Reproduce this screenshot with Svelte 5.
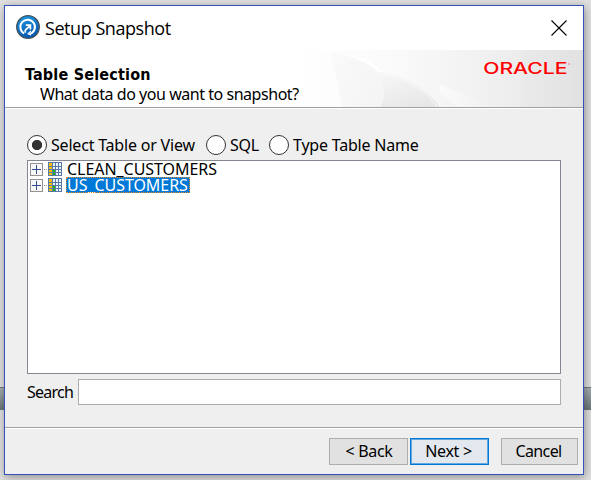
<script>
  let mode = $state('table');
  let search = $state('');
  let selected = $state('US_CUSTOMERS');
  const modes = [
    { id: 'table', label: 'Select Table or View', width: 179, spacing: -0.2 },
    { id: 'sql', label: 'SQL', width: 63, spacing: -0.3 },
    { id: 'name', label: 'Type Table Name', width: 160, spacing: -0.2 }
  ];
  const tables = ['CLEAN_CUSTOMERS', 'US_CUSTOMERS'];
</script>

<main class="desktop">
  <div class="taskbar"></div>
  <section class="dialog">
    <header class="titlebar">
      <svg class="appicon" width="24" height="24" viewBox="0 0 24 24">
        <defs>
          <linearGradient id="ball" x1="0" y1="0" x2="0.3" y2="1">
            <stop offset="0" stop-color="#1b9be0" />
            <stop offset="1" stop-color="#0758b4" />
          </linearGradient>
        </defs>
        <circle cx="12" cy="12" r="11.3" fill="url(#ball)" stroke="#45535f" stroke-width="1.3" />
        <path d="M8.2 18.4 A7.3 7.3 0 1 1 13.6 19" fill="none" stroke="#fff" stroke-width="2" />
        <path d="M15 15.8 L12 18.8 L15 20" fill="none" stroke="#fff" stroke-width="1.1" />
        <path d="M9.8 10.2 H14.4 V14.6 M14 10.6 L9.6 14.8 Q8.6 16 9.6 17.6" fill="none" stroke="#fff" stroke-width="1.7" />
      </svg>
      <h1>Setup Snapshot</h1>
      <svg class="close" width="16" height="16" viewBox="0 0 16 16">
        <path d="M0.5 0.5 L15.5 15.5 M15.5 0.5 L0.5 15.5" stroke="#000" stroke-width="1.1" />
      </svg>
    </header>

    <div class="banner">
      <svg class="art" width="291" height="57" viewBox="0 0 291 57">
        <defs>
          <linearGradient id="fade">
            <stop offset="0" stop-color="#fff" />
            <stop offset="0.35" stop-color="#fafafa" />
            <stop offset="0.75" stop-color="#eeeeee" />
            <stop offset="1" stop-color="#e2e2e2" />
          </linearGradient>
          <linearGradient id="shade" x1="0" y1="0" x2="1" y2="0.5">
            <stop offset="0" stop-color="#f7f7f7" stop-opacity="0.5" />
            <stop offset="1" stop-color="#f5f5f5" />
          </linearGradient>
          <linearGradient id="leaf" x1="0" y1="0" x2="0.7" y2="1">
            <stop offset="0" stop-color="#f8f8f8" />
            <stop offset="1" stop-color="#e7e7e7" />
          </linearGradient>
          <linearGradient id="beam" x1="0" y1="0" x2="1" y2="0.6">
            <stop offset="0" stop-color="#fff" stop-opacity="0.6" />
            <stop offset="1" stop-color="#fff" stop-opacity="0.1" />
          </linearGradient>
        </defs>
        <rect width="291" height="57" fill="url(#fade)" />
        <path d="M39 2 C62 5 88 16 94 36 Q94 46 88 57 H50 Z" fill="url(#shade)" />
        <path d="M39 3 C62 6 88 16 94 33 Q91 17 72 8 Z" fill="#fff" opacity="0.8" />
        <path d="M80 22 C112 23 133 38 148 57 H88 Q99 38 80 22 Z" fill="url(#leaf)" />
        <path d="M92 24 C118 30 135 42 145 57" fill="none" stroke="#fbfbfb" />
        <path d="M148 34 L198 57 H166 L148 43 Z" fill="url(#beam)" />
        <path d="M229 0 V57 H291 V0 Z" fill="#ddd" opacity="0.13" />
      </svg>
      <div class="heading">
        <h2>Table Selection</h2>
        <p>What data do you want to snapshot?</p>
      </div>
      <svg class="logo" width="88" height="22" viewBox="0 0 88 22">
        <text x="0.2" y="15" textLength="84.3" lengthAdjust="spacingAndGlyphs">ORACLE</text>
        <circle cx="86" cy="5" r="0.9" fill="#f88" />
      </svg>
    </div>

    <div class="content">
      <div class="modes">
        {#each modes as m}
          <label style:width="{m.width}px" style:letter-spacing="{m.spacing}px">
            <input type="radio" name="mode" value={m.id} bind:group={mode} />
            <span>{m.label}</span>
          </label>
        {/each}
      </div>

      <ul class="tree">
        {#each tables as t}
          <li>
            <svg width="34" height="16" viewBox="0 0 34 16" shape-rendering="crispEdges">
              <rect x="2.5" y="2.5" width="12" height="12" fill="#f8f8f8" stroke="#929292" />
              <path d="M4 8.5 H13 M8.5 4 V13" stroke="#31508f" />
              <path d="M16 8.5 H20" stroke="#999" stroke-dasharray="1 1" />
              <rect x="20" y="1" width="14" height="14" fill="#5878a8" />
              <path d="M21 2h3v3h-3z M21 6h3v2h-3z M21 9h3v2h-3z M21 12h3v2h-3z" fill="#fbc000" />
              <path d="M25 2h2v3h-2z M28 2h2v3h-2z M31 2h2v3h-2z M25 6h2v2h-2z M28 6h2v2h-2z M31 6h2v2h-2z M28 9h2v2h-2z M31 9h2v2h-2z M28 12h2v2h-2z M31 12h2v2h-2z" fill="#edf4fc" />
              <path d="M25 9h2v2h-2z M25 12h2v2h-2z" fill="#16b80c" />
            </svg>
            <button class:selected={selected === t} onclick={() => (selected = t)}>{t}</button>
          </li>
        {/each}
      </ul>

      <label class="search"><span>Search</span><input type="text" bind:value={search} /></label>
    </div>

    <footer>
      <button class="back">&lt; Back</button>
      <button class="next">Next &gt;</button>
      <button class="cancel">Cancel</button>
    </footer>
  </section>
</main>

<style>
  :global(body) { margin: 0; }
  * { box-sizing: border-box; }
  .desktop {
    position: relative;
    width: 591px;
    height: 480px;
    padding: 5px 7px 5px 4px;
    overflow: hidden;
    background: #e1e1e1;
    font: 16px/19px "Noto Sans", "Open Sans", sans-serif;
    letter-spacing: -0.3px;
    color: #000;
  }
  .taskbar {
    position: absolute;
    left: 0;
    top: 387px;
    width: 591px;
    height: 23px;
    border-top: 1px solid #727a7c;
    background: linear-gradient(#a8afb1, #6b7779);
  }
  .dialog {
    position: relative;
    display: flex;
    flex-direction: column;
    width: 580px;
    height: 470px;
    border: 1px solid #3450bd;
    background: #efefef;
    box-shadow: 1px 2px 9px rgba(0, 0, 0, 0.38);
  }
  .titlebar {
    display: flex;
    align-items: center;
    height: 44px;
    padding: 0 16px 0 11px;
    background: #fff;
  }
  .appicon { flex: none; margin-bottom: 2px; }
  h1 {
    flex: 1;
    margin: 0 0 0 5px;
    font: 18px/24px "Open Sans", sans-serif;
    letter-spacing: -0.45px;
  }
  .close { flex: none; margin-bottom: 1px; }
  .banner {
    position: relative;
    display: flex;
    justify-content: space-between;
    height: 59px;
    padding: 0 13px 0 20px;
    border-bottom: 1px solid #fff;
    background: #fff;
    box-shadow: inset 0 -1px #a0a0a0;
  }
  .art { position: absolute; right: 0; top: 0; }
  .heading { position: relative; padding-top: 15px; }
  h2 { margin: 0; font: bold 16px/19px "DejaVu Sans Condensed", "DejaVu Sans", sans-serif; font-stretch: condensed; letter-spacing: 0.2px; }
  p { margin: 0 0 0 15px; line-height: 20px; letter-spacing: -0.46px; white-space: nowrap; }
  .logo { position: relative; margin-top: 9px; margin-right: -1px; overflow: visible; }
  .logo text { font: 500 15.5px "Inter", sans-serif; fill: #f00; letter-spacing: 0; }
  .content { flex: 1; padding: 26px 22px 0; }
  .modes { display: flex; height: 20px; }
  .modes label { display: flex; align-items: center; white-space: nowrap; }
  .modes input {
    appearance: none;
    flex: none;
    width: 20px;
    height: 20px;
    margin: 0 4px 0 0;
    border: 1px solid #333;
    border-radius: 50%;
    background: #fff;
  }
  .modes input:checked { background: radial-gradient(circle, #333 4.7px, #fff 5.5px); }
  .tree {
    height: 214px;
    margin: 5px 0 0;
    padding: 0;
    border: 1px solid #828790;
    background: #fff;
    list-style: none;
  }
  li { display: flex; height: 16px; }
  li button {
    height: 16px;
    margin-left: 4px;
    padding: 0 2px 0 1px;
    border: 0;
    background: none;
    font: inherit;
    line-height: 16px;
    letter-spacing: -0.05px;
    color: #000;
  }
  li button.selected { background: #0078d7; color: #fff; outline: 1px dotted #e88a28; outline-offset: -1px; }
  .search { display: flex; align-items: center; height: 26px; margin-top: 5px; }
  .search span { width: 51px; letter-spacing: -0.75px; }
  .search input { flex: 1; height: 26px; border: 1px solid #abadb3; background: #fff; outline: 0; }
  footer {
    display: flex;
    height: 47px;
    padding: 10px 5px 0 324px;
    border-top: 1px solid #a0a0a0;
    box-shadow: inset 0 1px #fff;
  }
  footer button {
    width: 79px;
    height: 27px;
    padding: 0;
    border: 1px solid #adadad;
    background: #e1e1e1;
    font: inherit;
    line-height: 19px;
    letter-spacing: -0.3px;
    color: #000;
  }
  footer .back { padding-left: 1px; }
  footer .next { margin: 0 12px 0 2px; padding-right: 2px; border: 1px solid #0078d7; box-shadow: inset 0 0 0 1px #64a8df; background: #e3e8ee; }
  footer .cancel { width: 77px; padding-right: 2px; letter-spacing: -0.6px; }
</style>
